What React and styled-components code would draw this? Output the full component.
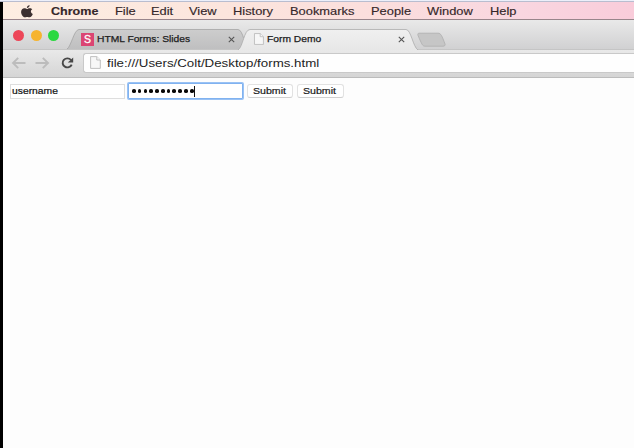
import React from 'react';
import styled, { createGlobalStyle } from 'styled-components';

const Global = createGlobalStyle`
  * { box-sizing: border-box; }
  html, body { margin: 0; height: 100%; overflow: hidden; background: #fdfdfd; }
  body { font-family: "Liberation Sans", Arial, sans-serif; }
`;

const Screen = styled.div`
  width: 634px;
  height: 448px;
  display: flex;
  flex-direction: column;
  background: #000;
`;

const TopEdge = styled.div`
  flex: none;
  height: 2px;
  background: linear-gradient(#eceffa 50%, #b9bdcf 50%);
`;

const MenuBar = styled.nav`
  flex: none;
  height: 18px;
  margin-left: 3px;
  padding-left: 18px;
  display: flex;
  align-items: center;
  background: linear-gradient(90deg, #fdeee2 0%, #fce5dd 35%, #fbdedd 60%, #f9d6e0 82%, #f9ccda 100%);
  border-bottom: 1px solid #98858b;
`;

const Wide = styled.span`
  display: block;
  white-space: pre;
  line-height: 14px;
  transform: scaleX(${p => p.$x});
  transform-origin: 0 50%;
`;

const MenuItem = styled.div`
  width: ${p => p.$w}px;
  font-size: 11px;
  font-weight: ${p => (p.$bold ? 700 : 400)};
  color: #35272a;
  -webkit-text-stroke: 0.15px #35272a;
`;

const AppleSlot = styled.div`
  width: 29.5px;
  height: 14px;
`;

const Browser = styled.main`
  flex: 1;
  margin-left: 3px;
  display: flex;
  flex-direction: column;
  background: #fdfdfd;
`;

const TabStrip = styled.header`
  flex: none;
  height: 29px;
  display: flex;
  align-items: flex-end;
  background: linear-gradient(#e9e9e9, #d1d1d2);
`;

const Lights = styled.div`
  width: 64px;
  height: 29px;
  padding: 9.5px 0 0 10px;
  display: flex;
  gap: 6.5px;
`;

const Light = styled.i`
  width: 11px;
  height: 11px;
  border-radius: 50%;
  background: ${p => p.$c};
`;

const Tab = styled.div`
  position: relative;
  z-index: ${p => (p.$active ? 2 : 1)};
  width: ${p => p.$w}px;
  height: 20px;
  margin-left: ${p => p.$shift || 0}px;
  padding: 0 ${p => p.$end}px 0 ${p => p.$start}px;
  display: flex;
  align-items: center;
`;

const TabShape = styled.svg`
  position: absolute;
  inset: 0;
  z-index: -1;
  overflow: visible;
`;

const TabTitle = styled.div`
  flex: 1;
  font-size: 9.5px;
  color: #202020;
  -webkit-text-stroke: 0.25px #202020;
`;

const Favicon = styled.div`
  width: 13px;
  height: 13px;
  margin-right: 3px;
  background: #db4573;
  color: #fff;
  font-size: 10.5px;
  line-height: 13px;
  text-align: center;
  -webkit-text-stroke: 0.3px #fff;
`;

const Slot = styled.div`
  display: flex;
  width: ${p => p.$w}px;
`;

const NewTab = styled.div`
  width: 31px;
  height: 20px;
  margin-left: -2px;
`;

const Toolbar = styled.div`
  flex: none;
  height: 29px;
  padding: 3px 0 4px 8px;
  display: flex;
  align-items: center;
  background: linear-gradient(#e9e9e9, #d5d5d5);
  border-top: 1px solid #c5c5c5;
  border-bottom: 1px solid #bcbcbc;
`;

const AddressBar = styled.div`
  flex: 1;
  height: 20px;
  margin-top: -1px;
  padding-left: 6px;
  display: flex;
  align-items: center;
  background: #fefefe;
  border: 1px solid #c9c9c9;
  border-right: 0;
  border-radius: 3px 0 0 3px;
  font-size: 11.5px;
  color: #1d1d1d;
`;

const Form = styled.form`
  padding: 5px 0 0 7px;
  display: flex;
  align-items: center;
`;

const Field = styled.div`
  width: 115px;
  height: 15px;
  margin-right: 3px;
  padding-left: 1px;
  display: flex;
  align-items: center;
  background: #fff;
  border: 1px solid #dedede;
  font-size: 9.3px;
  color: #111;
  -webkit-text-stroke: 0.2px #111;
`;

const Password = styled(Field)`
  height: 16px;
  padding-left: 3px;
  border: 1px solid #80b2f0;
  border-radius: 1px;
  box-shadow: 0 0 0 1px #9ac2f4;
`;

const Dots = styled.div`
  display: flex;
  gap: 2.1px;
`;

const Dot = styled.i`
  width: 3.7px;
  height: 3.7px;
  border-radius: 50%;
  background: #080808;
`;

const Caret = styled.i`
  width: 1px;
  height: 11px;
  background: #111;
`;

const Button = styled.div`
  width: ${p => p.$w}px;
  height: 14px;
  margin-left: ${p => p.$gap}px;
  padding-left: 5px;
  display: flex;
  align-items: center;
  background: #fff;
  border: 1px solid #e2e2e2;
  border-bottom-color: #d0d0d0;
  border-radius: 3px;
  font-size: 9.3px;
  color: #1b1b1b;
  -webkit-text-stroke: 0.2px #1b1b1b;
`;

const menus = [
  ['Chrome', 64.5, true], ['File', 36], ['Edit', 38], ['View', 44], ['History', 56.5],
  ['Bookmarks', 81.5], ['People', 56], ['Window', 62.5], ['Help', 40],
];

const AppleIcon = () => (
  <svg width="12" height="13" viewBox="0 0 12 14" fill="#3c3030" preserveAspectRatio="none">
    <path d="M8.6 0C8.7 1.7 7.4 3.2 5.9 3.2C5.7 1.7 7 .3 8.6 0Z" />
    <path d="M6 4.2C6.8 4.2 7.5 3.4 8.8 3.4C9.9 3.4 10.8 3.9 11.3 4.7C9.2 5.9 9.6 8.8 11.8 9.6C11.2 11.3 10 13.3 8.7 13.3C7.7 13.3 7.3 12.8 6.2 12.8C5.1 12.8 4.7 13.3 3.8 13.3C2 13.3 .1 10 .1 7.5C.1 5 1.6 3.5 3.4 3.5C4.5 3.5 5.3 4.2 6 4.2Z" />
  </svg>
);

const PageIcon = ({ w, h }) => (
  <svg width={w} height={h} viewBox="0 0 11 13" fill="#f7f7f7" stroke="#b9b9b9" strokeWidth="0.9">
    <path d="M.6 .6H6.8L10.3 4V12.4H.6Z" />
    <path d="M6.8 .6V4H10.3" />
  </svg>
);

const CloseIcon = () => (
  <svg width="7" height="7" viewBox="0 0 7 7" stroke="#555" strokeWidth="1.1">
    <path d="M.8 .8L6.2 6.2M6.2 .8L.8 6.2" />
  </svg>
);

const ArrowIcon = ({ forward }) => (
  <svg width="15" height="12" viewBox="0 0 15 12" fill="none" stroke="#bcbcbc" strokeWidth="1.9">
    <path d={forward ? 'M.5 6H13M7.8 .9L13 6L7.8 11.1' : 'M14.5 6H2M7.2 .9L2 6L7.2 11.1'} />
  </svg>
);

const ReloadIcon = () => (
  <svg width="13" height="12" viewBox="0 0 13 12">
    <path d="M10 3A4.7 4.5 0 1 0 10.7 7.6" fill="none" stroke="#484848" strokeWidth="1.9" />
    <path d="M12.2 .4V5.6H6.8Z" fill="#484848" />
  </svg>
);

export default function App() {
  return (
    <Screen>
      <Global />
      <TopEdge />
      <MenuBar>
        <AppleSlot><AppleIcon /></AppleSlot>
        {menus.map(([name, w, bold]) => (
          <MenuItem key={name} $w={w} $bold={bold}><Wide $x={bold ? 1.14 : 1.17}>{name}</Wide></MenuItem>
        ))}
      </MenuBar>
      <Browser>
        <TabStrip>
          <Lights><Light $c="#ed4658" /><Light $c="#f6b42f" /><Light $c="#2bd840" /></Lights>
          <Tab $w={181} $start={14} $end={9.5}>
            <TabShape width="181" height="20" viewBox="0 0 181 20">
              <defs>
                <linearGradient id="idle" x2="0" y2="1"><stop stopColor="#cdcdcd" /><stop offset="1" stopColor="#bfbfc0" /></linearGradient>
              </defs>
              <path d="M0 20C4 18 7 .5 12 .5H171C176 .5 178 18 181 20" fill="url(#idle)" stroke="#a5a5a5" strokeWidth="0.8" />
            </TabShape>
            <Favicon>S</Favicon>
            <TabTitle><Wide $x={1.08}>HTML Forms: Slides</Wide></TabTitle>
            <Slot $w={11}><CloseIcon /></Slot>
          </Tab>
          <Tab $active $w={180} $start={15} $end={12} $shift={-10}>
            <TabShape width="180" height="21" viewBox="0 0 180 21">
              <defs>
                <linearGradient id="front" x2="0" y2="1"><stop stopColor="#f0f0f0" /><stop offset="1" stopColor="#e7e7e7" /></linearGradient>
              </defs>
              <path d="M0 21C5 18 6 .5 12 .5H168C173 .5 175 18 180 21" fill="url(#front)" stroke="#acacac" strokeWidth="0.8" />
            </TabShape>
            <Slot $w={14}><PageIcon w={12} h={12} /></Slot>
            <TabTitle><Wide $x={1.08}>Form Demo</Wide></TabTitle>
            <Slot $w={8}><CloseIcon /></Slot>
          </Tab>
          <NewTab>
            <svg width="31" height="20" viewBox="0 0 31 20">
              <path d="M3 4.2H22C25 4.2 26 7 29 15C29.5 16.5 28.5 17.2 27 17.2H9C6.5 17.2 6 15.5 2 6.5C1.6 5.1 2 4.2 3 4.2Z" fill="#c6c6c6" stroke="#adadad" strokeWidth="0.8" />
            </svg>
          </NewTab>
        </TabStrip>
        <Toolbar>
          <Slot $w={24}><ArrowIcon /></Slot>
          <Slot $w={26}><ArrowIcon forward /></Slot>
          <Slot $w={22}><ReloadIcon /></Slot>
          <AddressBar>
            <Slot $w={16.5}><PageIcon w={11} h={13} /></Slot>
            <Wide $x={1.157}>file:///Users/Colt/Desktop/forms.html</Wide>
          </AddressBar>
        </Toolbar>
        <Form>
          <Field><Wide $x={1.11}>username</Wide></Field>
          <Password>
            <Dots>{Array.from({ length: 11 }, (_, i) => <Dot key={i} />)}</Dots>
            <Caret />
          </Password>
          <Button $w={46} $gap={1}><Wide $x={1.14}>Submit</Wide></Button>
          <Button $w={47} $gap={4}><Wide $x={1.14}>Submit</Wide></Button>
        </Form>
      </Browser>
    </Screen>
  );
}
